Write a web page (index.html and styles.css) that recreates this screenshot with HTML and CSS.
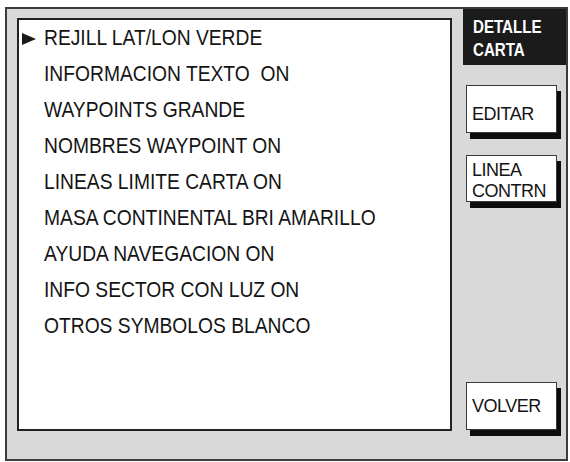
FILE: index.html
```html
<!DOCTYPE html>
<html lang="es">
<head>
<meta charset="utf-8">
<title>Detalle carta</title>
<link rel="stylesheet" href="styles.css">
</head>
<body>
<div class="frame">
  <div class="list-box">
    <ul class="menu">
      <li class="row"><span class="marker"><svg width="14" height="12" viewBox="0 0 14 12"><polygon points="0,0 14,6 0,12" fill="#1a1a1a"/></svg></span><span class="label">REJILL LAT/LON VERDE</span></li>
      <li class="row"><span class="marker"></span><span class="label">INFORMACION TEXTO&nbsp; ON</span></li>
      <li class="row"><span class="marker"></span><span class="label">WAYPOINTS GRANDE</span></li>
      <li class="row"><span class="marker"></span><span class="label">NOMBRES WAYPOINT ON</span></li>
      <li class="row"><span class="marker"></span><span class="label">LINEAS LIMITE CARTA ON</span></li>
      <li class="row"><span class="marker"></span><span class="label">MASA CONTINENTAL BRI AMARILLO</span></li>
      <li class="row"><span class="marker"></span><span class="label">AYUDA NAVEGACION ON</span></li>
      <li class="row"><span class="marker"></span><span class="label">INFO SECTOR CON LUZ ON</span></li>
      <li class="row"><span class="marker"></span><span class="label">OTROS SYMBOLOS BLANCO</span></li>
    </ul>
  </div>
  <div class="side">
    <div class="title"><span class="title-line">DETALLE</span><span class="title-line">CARTA</span></div>
    <div class="btn btn-editar"><span>EDITAR</span></div>
    <div class="btn btn-two"><span>LINEA<br>CONTRN</span></div>
    <div class="btn btn-volver"><span>VOLVER</span></div>
  </div>
</div>
</body>
</html>
```

FILE: styles.css
```css
html, body {
  margin: 0;
  padding: 0;
  background: #ffffff;
}

body {
  font-family: "Liberation Sans", Arial, sans-serif;
  color: #141414;
}

.frame {
  box-sizing: border-box;
  margin: 7px 0 0 5px;
  width: 563px;
  height: 454px;
  border: 2px solid #3c3c3c;
  background: #d9d9d9;
  display: flex;
  padding: 9px 0 28px 10px;
}

.list-box {
  box-sizing: border-box;
  width: 435px;
  height: 413px;
  background: #ffffff;
  border: 2px solid #222222;
  flex: none;
}

.menu {
  list-style: none;
  margin: 0;
  padding: 0 0 0 3px;
}

.row {
  display: flex;
  align-items: center;
  height: 36px;
  font-size: 22px;
  line-height: 36px;
  white-space: nowrap;
}

.marker {
  flex: none;
  width: 22px;
  display: flex;
  align-items: center;
  padding-top: 1px;
}

.marker svg {
  display: block;
}

.label {
  display: inline-block;
  transform: scaleX(0.875);
  transform-origin: left center;
}

.side {
  flex: 1;
  margin: -9px 0 -28px 11px;
  padding-bottom: 29px;
  display: flex;
  flex-direction: column;
}

.title {
  box-sizing: border-box;
  height: 56px;
  background: #1b1b1b;
  color: #ffffff;
  font-weight: bold;
  font-size: 18px;
  line-height: 23px;
  padding: 7px 0 3px 10px;
  display: flex;
  flex-direction: column;
}

.title-line {
  display: block;
  transform: scaleX(0.84);
  transform-origin: left center;
  white-space: nowrap;
}

.btn {
  box-sizing: border-box;
  width: 91px;
  height: 48px;
  margin-left: 3px;
  background: #ffffff;
  border: 1px solid #3a3a3a;
  box-shadow: 4px 6px 0 #0c0c0c;
  display: flex;
  align-items: center;
  padding: 0 0 0 5px;
  font-size: 18px;
  line-height: 21px;
  letter-spacing: -0.5px;
  color: #141414;
  white-space: nowrap;
}

.btn-editar {
  margin-top: 20px;
  padding-top: 10px;
}

.btn-two {
  margin-top: 22px;
  height: 47px;
  padding-top: 4px;
}

.btn-volver {
  margin-top: auto;
}
```
